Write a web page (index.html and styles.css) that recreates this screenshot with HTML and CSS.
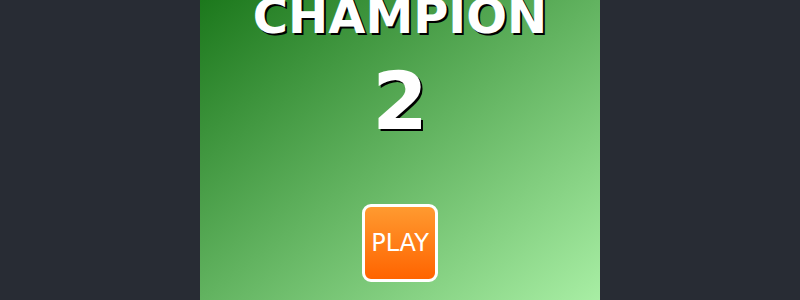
FILE: index.html
```html
<!DOCTYPE html>
<html>
<head>
<meta charset="utf-8">
<link rel="stylesheet" href="styles.css">
</head>
<body>
<main class="panel">
  <h1 class="title">CHAMPION</h1>
  <div class="score">2</div>
  <button class="play">PLAY</button>
</main>
</body>
</html>
```

FILE: styles.css
```css
html, body {
  margin: 0;
  padding: 0;
  height: 300px;
  overflow: hidden;
}
body {
  background: #282c34;
  font-family: "DejaVu Sans", sans-serif;
}
.panel {
  width: 400px;
  height: 300px;
  margin: 0 auto;
  background: linear-gradient(to bottom right, #1c781c, #a8eea4);
  display: flex;
  flex-direction: column;
  align-items: center;
}
.title {
  margin: -8px 0 0;
  font-size: 48px;
  line-height: 48px;
  font-weight: bold;
  color: #fff;
  text-shadow: 2px 2px 0 #000;
}
.score {
  margin-top: 22px;
  font-size: 80px;
  line-height: 80px;
  font-weight: bold;
  color: #fff;
  text-shadow: 2px 2px 0 #000;
}
.play {
  margin-top: 62px;
  box-sizing: border-box;
  width: 76px;
  height: 78px;
  padding: 0;
  border: 3px solid #fff;
  border-radius: 9px;
  background: linear-gradient(to bottom, #ff9a30, #ff6400);
  color: #fff;
  font-family: "DejaVu Sans", sans-serif;
  font-size: 24px;
  line-height: 28px;
}
```
